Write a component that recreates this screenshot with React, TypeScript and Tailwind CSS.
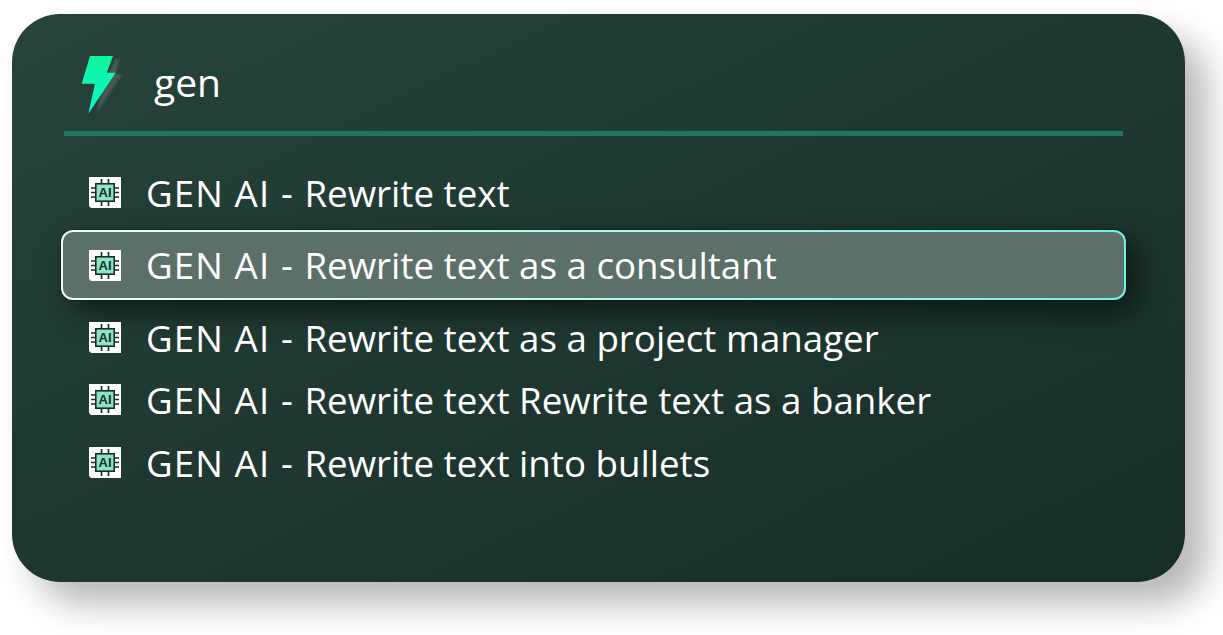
const rows = [
  { label: "Rewrite text", cls: "h-[62px] mt-[25px]" },
  { label: "Rewrite text as a consultant", selected: true, cls: "h-[70px] mt-[7px]" },
  { label: "Rewrite text as a project manager", cls: "h-[62px] mt-[6px]" },
  { label: "Rewrite text Rewrite text as a banker", cls: "h-[62px]" },
  { label: "Rewrite text into bullets", cls: "h-[62px] mt-[1px]" },
];

function ChipIcon() {
  return (
    <svg width="34" height="33" viewBox="0 0 34 33" className="shrink-0" aria-hidden="true">
      <path d="M1 1H33V32H3L1 30Z" fill="#ffffff" />
      <path d="M13.500 3V8M20.500 3V8M13.500 25V30M20.500 25V30M3 12H8M3 16.500H8M3 21H8M26 12H31M26 16.500H31M26 21H31" stroke="#16302a" strokeWidth="1.7" />
      <rect x="7.800" y="7.800" width="18.400" height="17.400" fill="#8fe3c5" stroke="#16302a" strokeWidth="1.6" />
      <text x="17" y="21.200" textAnchor="middle" fontSize="13" fontWeight="700" fill="#16302a" style={{ fontFamily: '"Liberation Sans", sans-serif' }}>AI</text>
    </svg>
  );
}

function Bolt() {
  return (
    <svg width="46" height="64" viewBox="0 0 46 64" className="mt-[4px] shrink-0" aria-hidden="true">
      <defs>
        <linearGradient id="bolt" x1="0.5" y1="0" x2="0.5" y2="1">
          <stop offset="0" stopColor="#12f59c" />
          <stop offset="1" stopColor="#0cf5d2" />
        </linearGradient>
        <filter id="soft" x="-30%" y="-30%" width="160%" height="160%">
          <feGaussianBlur stdDeviation="1.2" />
        </filter>
      </defs>
      <path d="M36 6L41 6L36 21L43 21L18 60L24 31L30 21Z" fill="#7f8f8a" opacity="0.35" filter="url(#soft)" />
      <path d="M11 3L34 3L27.700 19.700L36.700 19.700L9.300 60.700L16 30.700L2.700 30.700Z" fill="url(#bolt)" />
    </svg>
  );
}

function Label({ text, nudge }: { text: string; nudge: boolean }) {
  return (
    <span className={`ml-[24px] whitespace-nowrap text-[36.7px] leading-none text-white ${nudge ? "mt-[2px]" : ""}`}>
      <span className="tracking-[1.1px]">GEN AI - </span>
      {text}
    </span>
  );
}

export default function App() {
  return (
    <div className="h-[635px] w-[1223px] overflow-hidden bg-white pl-[12px] pt-[14px]" style={{ fontFamily: '"Open Sans", "Noto Sans", sans-serif' }}>
      <div className="h-[568px] w-[1173px] rounded-[48px] bg-gradient-to-br from-[#26433c] to-[#172d27] pl-[52px] pr-[62px] shadow-[22px_22px_34px_rgba(0,0,0,0.28)]">
        <div className="flex h-[122px] items-center border-b-[5px] border-[#1f7563] pl-[15px] pt-[20px]">
          <Bolt />
          <span className="ml-[29px] -mt-[2px] text-[39px] leading-none text-white">gen</span>
        </div>
        {rows.map((r) =>
          r.selected ? (
            <div
              key={r.label}
              className={`-mx-[3px] rounded-[12px] bg-gradient-to-r from-[#f0fbf8] to-[#6ff0e6] p-[2px] shadow-[0_0_0_1px_rgba(10,25,20,0.5),10px_12px_30px_rgba(0,0,0,0.55)] ${r.cls}`}
            >
              <div className="flex h-full items-center rounded-[10px] bg-[#5c706a] pl-[25px]">
                <ChipIcon />
                <Label text={r.label} nudge={false} />
              </div>
            </div>
          ) : (
            <div key={r.label} className={`flex items-center pl-[24px] ${r.cls}`}>
              <ChipIcon />
              <Label text={r.label} nudge={true} />
            </div>
          )
        )}
      </div>
    </div>
  );
}
